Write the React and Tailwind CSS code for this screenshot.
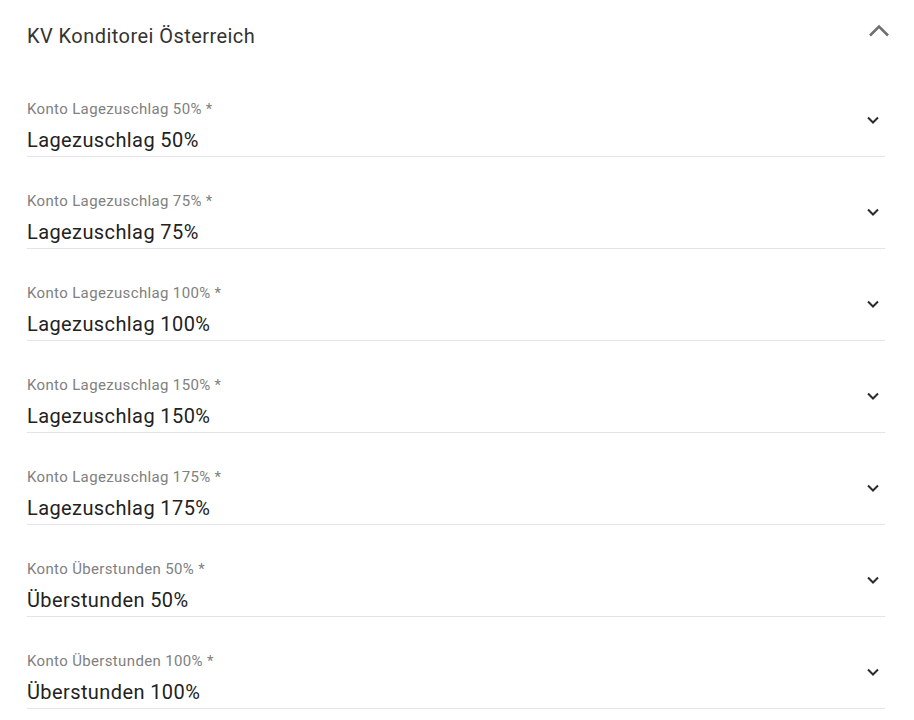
import React from 'react';

const rows = [
  { label: 'Konto Lagezuschlag 50% *', value: 'Lagezuschlag 50%' },
  { label: 'Konto Lagezuschlag 75% *', value: 'Lagezuschlag 75%' },
  { label: 'Konto Lagezuschlag 100% *', value: 'Lagezuschlag 100%' },
  { label: 'Konto Lagezuschlag 150% *', value: 'Lagezuschlag 150%' },
  { label: 'Konto Lagezuschlag 175% *', value: 'Lagezuschlag 175%' },
  { label: 'Konto Überstunden 50% *', value: 'Überstunden 50%' },
  { label: 'Konto Überstunden 100% *', value: 'Überstunden 100%' },
];

function ChevronDown() {
  return (
    <svg width="14" height="10" viewBox="0 0 14 10" className="block">
      <polyline points="2,2.5 7,7.5 12,2.5" fill="none" stroke="#2b2b2b" strokeWidth="2" />
    </svg>
  );
}

function ChevronUp() {
  return (
    <svg width="22" height="14" viewBox="0 0 22 14" className="block">
      <polyline points="2,11.5 11,2.5 20,11.5" fill="none" stroke="#707070" strokeWidth="2.6" />
    </svg>
  );
}

export default function App() {
  return (
    <div className="min-h-screen bg-white font-['Roboto',sans-serif] pl-[27px] pr-[29px]">
      {/* Panel header */}
      <div className="flex items-start justify-between pt-[22px]">
        <h2 className="text-[20px] leading-[28px] tracking-[0.45px] text-[#333333] font-normal">KV Konditorei Österreich</h2>
        <div className="mt-[2px] -mr-[5px]">
          <ChevronUp />
        </div>
      </div>

      {/* Select fields */}
      <div className="mt-[15px]">
        {rows.map((row) => (
          <div key={row.label} className="flex items-start border-b border-[#e2e2ea] pt-[35px] pb-[2px]">
            <div className="flex-1">
              <div className="text-[15px] leading-[18px] tracking-[0.35px] text-[#808080]">{row.label}</div>
              <div className="mt-[8px] text-[20px] leading-[28px] tracking-[0.4px] text-[#222222]">{row.value}</div>
            </div>
            <div className="mt-[15px] mr-[5px]">
              <ChevronDown />
            </div>
          </div>
        ))}
      </div>
    </div>
  );
}
